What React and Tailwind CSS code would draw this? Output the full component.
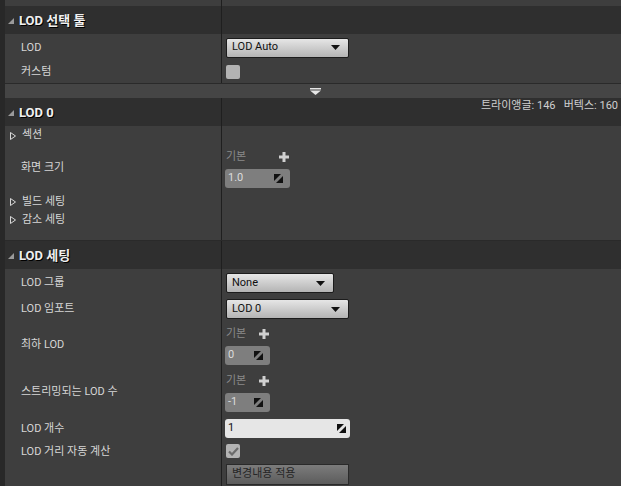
import React from "react";

const FONT = { fontFamily: "Roboto, 'Noto Sans CJK KR', sans-serif" };

// little diagonal "spin" marker on numeric boxes
const SpinMark = () => (
  <svg width="9" height="9" viewBox="0 0 9 9" className="shrink-0">
    <polygon points="0,0 7,0 0,7" fill="#111" />
    <polygon points="9,2 9,9 2,9" fill="#111" />
  </svg>
);

const Caret = ({ className = "" }) => (
  <svg width="9" height="5" viewBox="0 0 9 5" className={className}>
    <polygon points="0,0 9,0 4.5,5" fill="#111" />
  </svg>
);

const HeaderArrow = () => (
  <svg width="6" height="6" viewBox="0 0 6 6" className="mr-[5px]">
    <polygon points="6,0 6,6 0,6" fill="#9a9a9a" />
  </svg>
);

const SubArrow = () => (
  <svg width="6" height="8" viewBox="0 0 6 8" className="mr-[6px]">
    <polygon points="0.5,0.5 5.5,4 0.5,7.5" fill="none" stroke="#d8d8d8" strokeWidth="1" />
  </svg>
);

const Plus = () => (
  <svg width="10" height="10" viewBox="0 0 10 10">
    <rect x="3.5" y="0" width="3" height="10" fill="#d0d0d0" />
    <rect x="0" y="3.5" width="10" height="3" fill="#d0d0d0" />
  </svg>
);

const Header = ({ title, right }) => (
  <div className="flex h-[28px] bg-[#2f2f2f]">
    <div className="w-[217px] border-r border-[#1f1f1f] flex items-center pl-[3px] pt-[1px] text-[13px] font-bold text-[#f0f0f0] [text-shadow:1px_1px_0_#000]">
      <HeaderArrow />
      {title}
    </div>
    <div className="flex-1 flex justify-end items-start pr-[3px] text-[11px] text-[#cfcfcf] whitespace-pre">
      {right}
    </div>
  </div>
);

const Row = ({ h, label, sub, children, alignTop = false, padTop = "" }) => (
  <div className="flex bg-[#3e3e3e]" style={{ height: h }}>
    <div className="w-[217px] border-r border-[#1f1f1f] flex items-center pl-[5px] pt-[2px] text-[11px] text-[#d6d6d6]">
      {sub ? <SubArrow /> : <span className="w-[11px]" />}
      {label}
    </div>
    <div className={`flex-1 flex pl-[3px] ${padTop} ${alignTop ? "items-start" : "items-center"}`}>{children}</div>
  </div>
);

const Dropdown = ({ value, w }) => (
  <div
    className="ml-[1px] h-[20px] flex items-center justify-between pl-[5px] pr-[8px] rounded-[2px] border border-[#1c1c1c] bg-gradient-to-b from-[#e6e6e6] to-[#b4b4b4] text-[11px] text-[#101010]"
    style={{ width: w }}
  >
    <span>{value}</span>
    <Caret />
  </div>
);

const NumBox = ({ value, w }) => (
  <div className="flex flex-col" style={{ width: w }}>
    <div className="flex items-center justify-between h-[14px] pl-[1px] pr-[1px] text-[11px] text-[#8a8a8a]">
      <span>기본</span>
      <Plus />
    </div>
    <div className="mt-[5px] h-[19px] rounded-[3px] bg-[#7e7e7e] flex items-center justify-between pl-[3px] pr-[7px] text-[11px] text-[#dcdcdc]">
      <span>{value}</span>
      <SpinMark />
    </div>
  </div>
);

const Checkbox = ({ checked }) => (
  <div className="ml-[1px] w-[14px] h-[14px] rounded-[2px] bg-[#b3b3b3] flex items-center justify-center">
    {checked && (
      <svg width="11" height="9" viewBox="0 0 11 9">
        <polyline points="1,4.5 4,7.5 10,1" fill="none" stroke="#6b6b6b" strokeWidth="2.2" />
      </svg>
    )}
  </div>
);

export default function App() {
  return (
    <div className="w-[621px] h-[486px] overflow-hidden bg-[#282828] pl-[5px]" style={FONT}>
      <div className="flex flex-col">
        {/* tail of the previous category */}
        <div className="flex h-[6px] bg-[#3e3e3e]">
          <div className="w-[217px] border-r border-[#1f1f1f]" />
        </div>

        <Header title="LOD 선택 툴" />
        <Row h={26} label="LOD" padTop="pt-[1px]">
          <Dropdown value="LOD Auto" w={123} />
        </Row>
        <Row h={23} label="커스텀">
          <Checkbox />
        </Row>

        {/* advanced expander */}
        <div className="h-[15px] bg-[#454545] border-t border-[#2a2a2a] flex items-center justify-center">
          <svg width="11" height="7" viewBox="0 0 11 7" className="ml-[4px]">
            <rect x="0" y="0" width="11" height="1.5" fill="#e6e6e6" />
            <polygon points="0,2.5 11,2.5 5.5,7" fill="#e6e6e6" />
          </svg>
        </div>

        <Header title="LOD 0" right={"트라이앵글: 146   버텍스: 160"} />
        <Row h={17} label="섹션" sub />
        <Row h={49} label="화면 크기" alignTop>
          <div className="pt-[7px]">
            <NumBox value="1.0" w={65} />
          </div>
        </Row>
        <Row h={18} label="빌드 세팅" sub />
        <Row h={18} label="감소 세팅" sub />
        <Row h={12} />

        <div className="border-t border-[#2a2a2a]" />
        <Header title="LOD 세팅" />
        <Row h={26} label="LOD 그룹" padTop="pt-[2px]">
          <Dropdown value="None" w={108} />
        </Row>
        <Row h={26} label="LOD 임포트" padTop="pt-[2px]">
          <Dropdown value="LOD 0" w={123} />
        </Row>
        <Row h={47} label="최하 LOD" alignTop>
          <div className="pt-[6px]">
            <NumBox value="0" w={45} />
          </div>
        </Row>
        <Row h={46} label="스트리밍되는 LOD 수" alignTop>
          <div className="pt-[6px]">
            <NumBox value="-1" w={45} />
          </div>
        </Row>
        <Row h={28} label="LOD 개수">
          <div className="w-[125px] h-[19px] rounded-[3px] bg-[#e6e6e6] flex items-center justify-between pl-[3px] pr-[4px] text-[11px] text-[#111]">
            <span>1</span>
            <SpinMark />
          </div>
        </Row>
        <Row h={18} label="LOD 거리 자동 계산">
          <Checkbox checked />
        </Row>
        <Row h={28} alignTop>
          <div className="mt-[4px] ml-[1px] w-[123px] h-[21px] border border-[#2a2a2a] bg-gradient-to-b from-[#7c7c7c] to-[#5c5c5c] flex items-center pl-[5px] text-[11px] text-[#262626]">
            변경내용 적용
          </div>
        </Row>
      </div>
    </div>
  );
}
